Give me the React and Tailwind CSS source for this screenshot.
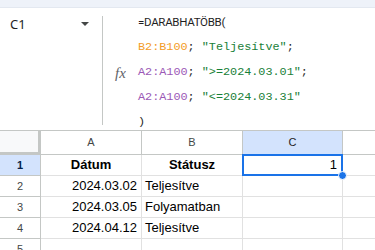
import React from 'react'

const mono = { fontFamily: '"Liberation Mono", "DejaVu Sans Mono", monospace' }

const rows = [
  { n: 1, a: 'Dátum', b: 'Státusz', c: '1', head: true },
  { n: 2, a: '2024.03.02', b: 'Teljesítve' },
  { n: 3, a: '2024.03.05', b: 'Folyamatban' },
  { n: 4, a: '2024.04.12', b: 'Teljesítve' },
  { n: 5, a: '', b: '' },
]

function FormulaBar() {
  return (
    <div className="flex h-[122px] bg-white">
      <div className="w-[102px] shrink-0 flex items-start justify-between pl-[10px] pr-[13px] pt-[7px]">
        <span className="text-[13px] text-[#1f1f1f]">C1</span>
        <span className="mt-[7px] w-0 h-0 border-l-[4px] border-r-[4px] border-t-[4px] border-l-transparent border-r-transparent border-t-[#444746]"></span>
      </div>
      <div className="w-px bg-[#c4c7c5] mt-[8px] mb-[5px]"></div>
      <div className="w-[35px] shrink-0 flex items-center justify-center pt-[8px]">
        <span className="text-[15px] italic text-[#5f6368]" style={{ fontFamily: '"Liberation Serif", serif' }}>fx</span>
      </div>
      <div className="pt-[2px] text-[11.8px] leading-[25px] text-[#1f1f1f]" style={mono}>
        <div className="tracking-[-0.3px]" style={{ fontFamily: 'Roboto, "Liberation Sans", sans-serif', fontSize: '11.5px' }}>=DARABHATÖBB(</div>
        <div>
          <span className="text-[#f39c26]">B2:B100</span>; <span className="text-[#188038]">"Teljesítve"</span>;
        </div>
        <div>
          <span className="text-[#9b59b6]">A2:A100</span>; <span className="text-[#188038]">"&gt;=2024.03.01"</span>;
        </div>
        <div>
          <span className="text-[#9b59b6]">A2:A100</span>; <span className="text-[#188038]">"&lt;=2024.03.31"</span>
        </div>
        <div>)</div>
      </div>
    </div>
  )
}

function Grid() {
  const cols = 'grid grid-cols-[41px_101px_101px_100px_1fr]'
  return (
    <div className="text-[13px] text-black" style={{ fontFamily: '"Liberation Sans", Arial, sans-serif' }}>
      <div className={`${cols} h-[25px] border-t border-[#c4c7c5]`}>
        <div className="bg-[#f8f9fa] border-r-[3px] border-b-[3px] border-[#c4c7c5]"></div>
        <div className="flex items-center justify-center text-[11px] text-[#444746] border-r border-b border-[#c4c7c5]">A</div>
        <div className="flex items-center justify-center text-[11px] text-[#444746] border-r border-b border-[#c4c7c5]">B</div>
        <div className="flex items-center justify-center text-[11px] text-[#1f1f1f] bg-[#d3e3fd] border-r border-b border-[#c4c7c5]">C</div>
        <div className="border-b border-[#c4c7c5]"></div>
      </div>
      {rows.map((r) => (
        <div key={r.n} className={`${cols} h-[21px]`}>
          <div
            className={
              r.head
                ? 'flex items-center justify-center text-[11px] font-bold text-[#041e49] bg-[#d3e3fd] border-r border-b border-[#c4c7c5]'
                : 'flex items-center justify-center text-[11px] text-[#444746] border-r border-b border-[#c4c7c5]'
            }
          >
            {r.n}
          </div>
          <div className={r.head ? 'flex items-center justify-center font-bold border-r border-b border-[#e1e1e1]' : 'flex items-center justify-end pr-[4px] border-r border-b border-[#e1e1e1]'}>
            {r.a}
          </div>
          <div className={r.head ? 'flex items-center justify-center font-bold border-r border-b border-[#e1e1e1]' : 'flex items-center pl-[3px] border-r border-b border-[#e1e1e1]'}>
            {r.b}
          </div>
          {r.head ? (
            <div className="relative -mt-px -ml-px h-[22px] flex items-center justify-end pr-[4px] border-2 border-[#1a73e8]">
              {r.c}
              <span className="absolute -right-[6px] -bottom-[6px] w-[9px] h-[9px] rounded-full bg-[#1a73e8] border border-white"></span>
            </div>
          ) : (
            <div className="border-r border-b border-[#e1e1e1]"></div>
          )}
          <div className="border-b border-[#e1e1e1]"></div>
        </div>
      ))}
    </div>
  )
}

export default function App() {
  return (
    <div className="w-[375px] h-[250px] overflow-hidden bg-white">
      <div className="h-[8px] bg-[#eef2f9] border-b border-[#e3e8f0]"></div>
      <FormulaBar />
      <Grid />
    </div>
  )
}
